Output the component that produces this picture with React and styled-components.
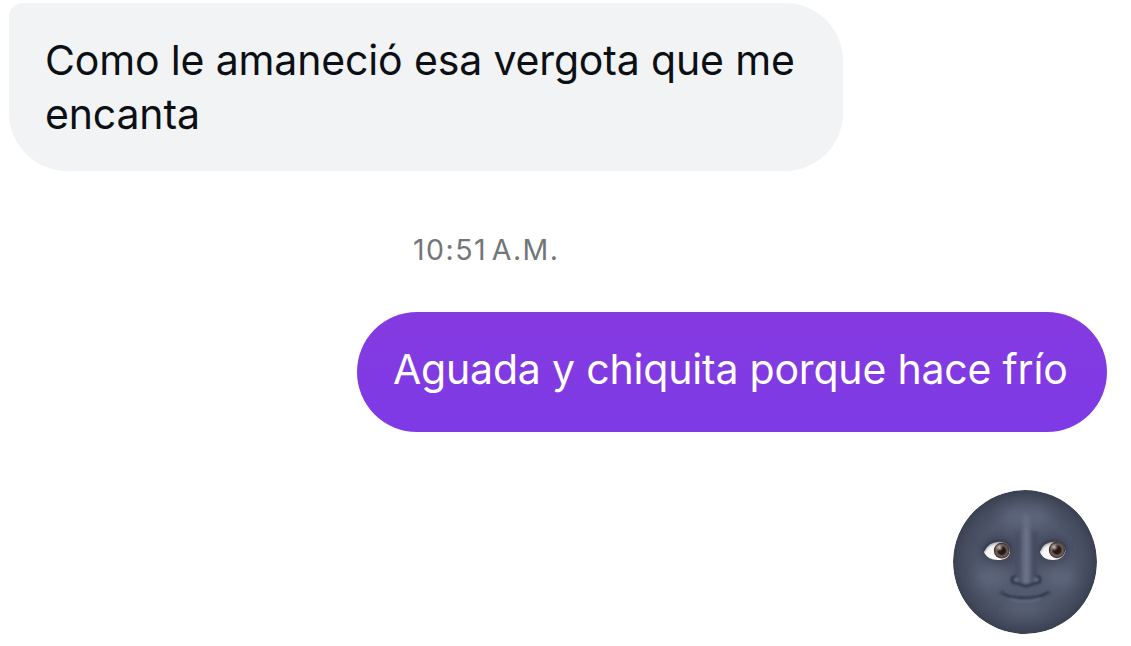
import React from "react";
import styled, { createGlobalStyle } from "styled-components";

const GlobalStyle = createGlobalStyle`
  * {
    box-sizing: border-box;
  }
  body {
    margin: 0;
    background: #fff;
    overflow: hidden;
  }
`;

const Chat = styled.main`
  display: flex;
  flex-direction: column;
  width: 1131px;
  height: 646px;
  padding: 3px 24px 0 9px;
  background: #fff;
  font-family: Inter, "Liberation Sans", sans-serif;
`;

const Bubble = styled.div`
  align-self: ${({ $sent }) => ($sent ? "flex-end" : "flex-start")};
  width: ${({ $sent }) => ($sent ? "750px" : "834px")};
  height: ${({ $sent }) => ($sent ? "120px" : "168px")};
  padding: 30px 36px 0 36px;
  border-radius: ${({ $sent }) => ($sent ? "60px" : "14px 58px 58px 58px")};
  background: ${({ $sent }) =>
    $sent ? "linear-gradient(#853ae0, #7e3ae6)" : "#f2f3f5"};
  color: ${({ $sent }) => ($sent ? "#fff" : "#0c1014")};
`;

const Message = styled.p`
  margin: 0;
  font-size: 41px;
  line-height: 54px;
  letter-spacing: ${({ $spacing }) => $spacing || "0"};
  white-space: nowrap;
`;

const Time = styled.time`
  margin: 61px 0 44px 404px;
  height: 36px;
  font-size: 28.5px;
  line-height: 36px;
  letter-spacing: 1.5px;
  word-spacing: -5px;
  color: #737679;
  white-space: nowrap;
`;

const Emoji = styled.svg`
  align-self: flex-end;
  width: 144px;
  height: 144px;
  margin: 58px 10px 0 0;
`;

const MoonFace = () => (
  <Emoji viewBox="0 0 144 144" role="img" aria-label="New moon face">
    <defs>
      <radialGradient id="skin" cx="50%" cy="50%" r="50%">
        <stop offset="0" stopColor="#555d73" />
        <stop offset="0.65" stopColor="#50586d" />
        <stop offset="0.88" stopColor="#444b5e" />
        <stop offset="1" stopColor="#3a4050" />
      </radialGradient>
      <linearGradient id="bridge" x1="0" x2="1">
        <stop offset="0" stopColor="#3c4356" stopOpacity="0" />
        <stop offset="0.22" stopColor="#3c4356" stopOpacity="0.6" />
        <stop offset="0.5" stopColor="#6c758c" />
        <stop offset="0.78" stopColor="#3c4356" stopOpacity="0.8" />
        <stop offset="1" stopColor="#3c4356" stopOpacity="0" />
      </linearGradient>
      <radialGradient id="iris">
        <stop offset="0" stopColor="#1b110d" />
        <stop offset="0.45" stopColor="#2b1c18" />
        <stop offset="0.7" stopColor="#76625a" />
        <stop offset="0.85" stopColor="#5d4a43" />
        <stop offset="1" stopColor="#2c211e" />
      </radialGradient>
      <linearGradient id="eyeWhite" x1="0" x2="0" y1="0" y2="1">
        <stop offset="0" stopColor="#b9b7b5" />
        <stop offset="0.35" stopColor="#f6f4f2" />
        <stop offset="1" stopColor="#fff" />
      </linearGradient>
      <filter id="soft" x="-80%" y="-100%" width="260%" height="300%">
        <feGaussianBlur stdDeviation="6" />
      </filter>
      <filter id="fine" x="-10" y="-10" width="164" height="164" filterUnits="userSpaceOnUse">
        <feGaussianBlur stdDeviation="0.8" />
      </filter>
      <filter id="ridge" x="-10" y="-10" width="164" height="164" filterUnits="userSpaceOnUse">
        <feGaussianBlur stdDeviation="2" />
      </filter>
      <clipPath id="disc">
        <circle cx="72" cy="72" r="72" />
      </clipPath>
      <clipPath id="leftEye">
        <path d="M31 62 C34 55 40 51.5 47 51.7 C53 52 57 56 57 62 C56 68 51 70 45 70 C38 70 33 67 31 62Z" />
      </clipPath>
      <clipPath id="rightEye">
        <path d="M87 62 C89 55 95 51.5 102 51.7 C108 52 111.5 56 112.5 61 C111 67 106 70 100 70 C93 70 89 67 87 62Z" />
      </clipPath>
    </defs>
    <g clipPath="url(#disc)">
      <circle cx="72" cy="72" r="72" fill="url(#skin)" />
      <g filter="url(#soft)">
        <ellipse cx="73" cy="26" rx="26" ry="12" fill="#69728a" opacity="0.5" />
        <path d="M27 57 C34 43 52 43 63 54 L61 76 C50 72 38 75 27 65Z" fill="#323849" opacity="0.7" />
        <path d="M84 54 C92 43 109 43 117 57 L113 67 C104 75 93 72 86 76Z" fill="#323849" opacity="0.7" />
        <ellipse cx="37" cy="88" rx="15" ry="9" fill="#6a738a" opacity="0.5" />
        <ellipse cx="108" cy="88" rx="15" ry="9" fill="#6a738a" opacity="0.5" />
        <ellipse cx="72" cy="121" rx="20" ry="5" fill="#6a738a" opacity="0.4" />
      </g>
      <path d="M59 44 C63 56 63 72 60 86 Q73 94 87 86 C83 72 83 56 87 44 Q73 34 59 44Z" fill="url(#bridge)" filter="url(#ridge)" />
      <path d="M73 28 C74 45 74 66 73.5 87" stroke="#737c93" strokeWidth="6" opacity="0.55" filter="url(#ridge)" strokeLinecap="round" fill="none" />
      <g filter="url(#fine)" fill="none" strokeLinecap="round">
        <path d="M62 86.5 C57.5 87 57.5 92.5 62 93 C66 93 67 95.5 73 96 C79 95.5 80 93 84 93 C88.5 92.5 88.5 87 84 86.5" stroke="#272e3f" strokeWidth="1.9" />
        <path d="M63 89.5 h0.5 M83 89.5 h0.5" stroke="#687188" strokeWidth="3" />
        <path d="M73 90 v1" stroke="#6b748a" strokeWidth="5" />
        <path d="M50 103.5 C60 109.5 84 109.5 94 103" stroke="#252c3c" strokeWidth="1.8" />
        <path d="M58 109.5 C67 112.5 78 112.5 87 109" stroke="#6b748a" strokeWidth="2" opacity="0.55" />
        <path d="M47 104 Q48 101.5 50 101.5 M94 101.5 Q96 101.5 97 104" stroke="#353c4e" strokeWidth="1.4" />
      </g>
    </g>
    <g clipPath="url(#leftEye)">
      <rect x="30" y="50" width="29" height="22" fill="url(#eyeWhite)" />
      <circle cx="48.8" cy="60.7" r="7.9" fill="url(#iris)" />
      <circle cx="46.4" cy="57.8" r="2.3" fill="#e6e0dc" opacity="0.85" filter="url(#fine)" />
    </g>
    <g clipPath="url(#rightEye)">
      <rect x="86" y="50" width="29" height="22" fill="url(#eyeWhite)" />
      <circle cx="104" cy="60" r="8.2" fill="url(#iris)" />
      <circle cx="101.3" cy="57.3" r="2.3" fill="#e6e0dc" opacity="0.85" filter="url(#fine)" />
    </g>
    <g fill="none" stroke="#292b35" strokeWidth="1.2" filter="url(#fine)">
      <path d="M31 61 C35 53 42 50.5 49 51.5 C54 52.5 57 56 57 61" />
      <path d="M87 61 C90 53 97 50.5 104 51.5 C109 52.5 112 56 112.5 61" />
    </g>
  </Emoji>
);

const App = () => {
  return (
    <>
      <GlobalStyle />
      <Chat>
        <Bubble>
          <Message $spacing="-0.15px">
            Como le amaneció esa vergota que me
            <br />
            encanta
          </Message>
        </Bubble>
        <Time>10:51 A.M.</Time>
        <Bubble $sent>
          <Message $spacing="-0.19px">Aguada y chiquita porque hace frío</Message>
        </Bubble>
        <MoonFace />
      </Chat>
    </>
  );
};

export default App;
